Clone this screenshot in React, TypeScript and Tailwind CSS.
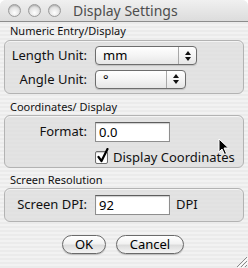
import React from "react";

const font = "font-['Noto_Sans','Liberation_Sans',sans-serif]";

function Light() {
  return (
    <div className="w-[13px] h-[13px] rounded-full border border-[#9a9a9a] bg-[radial-gradient(circle_at_50%_70%,#ffffff_0%,#e2e2e2_55%,#bdbdbd_100%)] shadow-[inset_0_1px_1px_rgba(0,0,0,0.15)]" />
  );
}

function Popup({ value, width, arrowAt }: { value: string; width: string; arrowAt: string }) {
  return (
    <div
      className={`${width} h-[19px] flex rounded-[4px] border border-[#6d6d6d] bg-[linear-gradient(#ffffff,#f4f4f4_50%,#e6e6e6)] shadow-[0_1px_1px_rgba(0,0,0,0.15)]`}
    >
      <div className={`${arrowAt} pl-[7px] text-[13px] leading-[17px] text-black`}>{value}</div>
      <div className="flex-1 border-l border-[#a8a8a8] flex flex-col items-center justify-center gap-[2px]">
        <svg width="6" height="4" viewBox="0 0 6 4"><path d="M3 0 L6 4 L0 4 Z" fill="#111" /></svg>
        <svg width="6" height="4" viewBox="0 0 6 4"><path d="M0 0 L6 0 L3 4 Z" fill="#111" /></svg>
      </div>
    </div>
  );
}

function Field({ value, width }: { value: string; width: string }) {
  return (
    <div className={`${width} h-[20px] bg-white border border-[#8e8e8e] border-t-[#5e5e5e] shadow-[inset_0_1px_1px_rgba(0,0,0,0.2)] pl-[3px] text-[13px] leading-[18px] text-black`}>
      {value}
    </div>
  );
}

function Label({ children }: { children: React.ReactNode }) {
  return <div className="w-[82px] shrink-0 text-right text-[13px] text-[#111] whitespace-nowrap">{children}</div>;
}

function GroupTitle({ children }: { children: React.ReactNode }) {
  return <div className="pl-[6px] h-[14px] text-[11px] leading-[14px] text-[#111] whitespace-nowrap">{children}</div>;
}

function Group({ children, className }: { children: React.ReactNode; className: string }) {
  return (
    <div className={`rounded-[6px] border border-[#b3b3b3] bg-[#dedede]/80 shadow-[inset_0_1px_0_rgba(255,255,255,0.6)] ${className}`}>
      {children}
    </div>
  );
}

export default function App() {
  return (
    <div
      className={`${font} relative w-[248px] h-[268px] overflow-hidden rounded-t-[6px] bg-[repeating-linear-gradient(0deg,#ebebeb_0px,#ebebeb_2px,#f2f2f2_2px,#f2f2f2_4px)]`}
    >
      {/* Title bar */}
      <div className="h-[22px] flex items-center border-b border-[#8c8c8c] bg-[linear-gradient(#f0f0f0,#dcdcdc)]">
        <div className="flex gap-[7px] pl-[8px]">
          <Light />
          <Light />
          <Light />
        </div>
        <div className="pl-[12px] text-[14px] leading-[20px] text-[#4d4d4d]">Display Settings</div>
      </div>

      <div className="px-[4px]">
        <div className="mt-[2px]">
          <GroupTitle>Numeric Entry/Display</GroupTitle>
        </div>
        <Group className="mt-[2px] h-[54px] pt-[5px]">
          <div className="flex items-center gap-[8px]">
            <Label>Length Unit:</Label>
            <Popup value="mm" width="w-[102px]" arrowAt="w-[82px]" />
          </div>
          <div className="flex items-center gap-[8px] mt-[4px]">
            <Label>Angle Unit:</Label>
            <Popup value="°" width="w-[91px]" arrowAt="w-[70px]" />
          </div>
        </Group>

        <div className="mt-[6px]">
          <GroupTitle>Coordinates/ Display</GroupTitle>
        </div>
        <Group className="mt-[1px] h-[53px] pt-[6px]">
          <div className="flex items-center gap-[8px]">
            <Label>Format:</Label>
            <Field value="0.0" width="w-[75px]" />
          </div>
          <div className="flex items-center gap-[5px] mt-[6px] pl-[90px]">
            <div className="relative w-[13px] h-[13px] bg-white border border-[#6f6f6f] rounded-[2px] shadow-[inset_0_1px_1px_rgba(0,0,0,0.2)]">
              <svg className="absolute -top-[4px] left-[1px]" width="12" height="15" viewBox="0 0 12 15">
                <path d="M1.5 9 L4.5 13 L10.5 1" stroke="#000" strokeWidth="2.2" fill="none" strokeLinecap="round" strokeLinejoin="round" />
              </svg>
            </div>
            <div className="text-[13px] text-[#111] whitespace-nowrap">Display Coordinates</div>
          </div>
        </Group>

        <div className="mt-[5px]">
          <GroupTitle>Screen Resolution</GroupTitle>
        </div>
        <Group className="mt-[1px] h-[34px] pt-[6px]">
          <div className="flex items-center gap-[8px]">
            <Label>Screen DPI:</Label>
            <Field value="92" width="w-[75px]" />
            <div className="text-[13px] text-[#111] -ml-[2px]">DPI</div>
          </div>
        </Group>

        <div className="flex justify-center gap-[10px] mt-[13px] pr-[2px]">
          <div className="w-[44px] h-[19px] rounded-full border border-[#6a6a6a] bg-[linear-gradient(#ffffff,#f2f2f2_45%,#dcdcdc_55%,#f4f4f4)] shadow-[0_1px_1px_rgba(0,0,0,0.2)] text-center text-[13px] leading-[17px] text-black">
            OK
          </div>
          <div className="w-[68px] h-[19px] rounded-full border border-[#6a6a6a] bg-[linear-gradient(#ffffff,#f2f2f2_45%,#dcdcdc_55%,#f4f4f4)] shadow-[0_1px_1px_rgba(0,0,0,0.2)] text-center text-[13px] leading-[17px] text-black">
            Cancel
          </div>
        </div>
      </div>

      {/* resize grip */}
      <svg className="absolute right-0 bottom-0" width="14" height="14" viewBox="0 0 14 14">
        <path d="M13 3 L3 13 M13 7 L7 13 M13 11 L11 13" stroke="#8a8a8a" strokeWidth="1" />
        <path d="M14 4 L4 14 M14 8 L8 14" stroke="#ffffff" strokeWidth="1" />
      </svg>

      {/* mouse pointer */}
      <svg className="absolute left-[218px] top-[138px]" width="12" height="18" viewBox="0 0 12 18">
        <path d="M1 1 L1 14 L4 11 L6.5 16.5 L8.5 15.5 L6 10 L10.5 10 Z" fill="#000" stroke="#fff" strokeWidth="1" />
      </svg>
    </div>
  );
}
